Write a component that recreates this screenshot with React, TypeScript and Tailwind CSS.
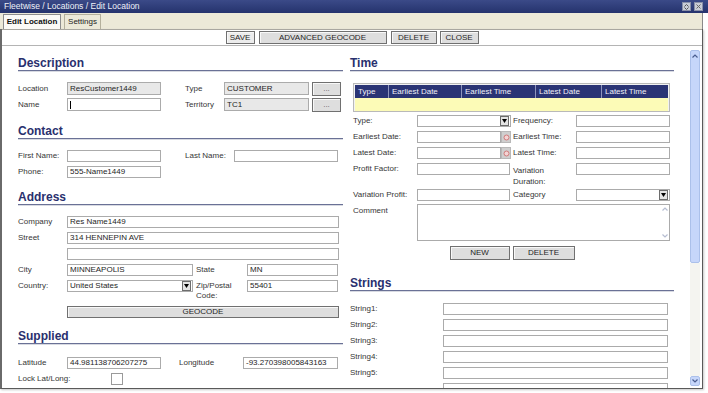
import React from "react";

type FP = { w: string; v?: string; ro?: boolean; h?: string; caret?: boolean; cls?: string };

function Field({ w, v, ro, h, caret, cls = "" }: FP) {
  return (
    <div
      className={`${w} ${h ?? "h-[12px]"} shrink-0 border border-[#ababab] ${
        ro ? "bg-[#e8e8e8]" : "bg-white"
      } flex items-center pl-[2px] text-[8px] text-[#1e1e1e] leading-none overflow-hidden whitespace-nowrap ${cls}`}
    >
      {caret && <span className="w-px h-[8px] bg-black" />}
      {v}
    </div>
  );
}

function Lbl({ w, children, cls = "" }: { w: string; children?: React.ReactNode; cls?: string }) {
  return <div className={`${w} shrink-0 text-[8px] text-[#363636] leading-[10px] ${cls}`}>{children}</div>;
}

function Btn({ w, h, children, cls = "" }: { w: string; h?: string; children?: React.ReactNode; cls?: string }) {
  return (
    <div
      className={`${w} ${h ?? "h-[13px]"} shrink-0 flex items-center justify-center border border-[#707070] bg-[#dedede] shadow-[inset_1px_1px_0_#f8f8f8] text-[8px] text-[#1e1e1e] leading-none ${cls}`}
    >
      {children}
    </div>
  );
}

function Arrow() {
  return (
    <div className="w-[9px] h-[10px] shrink-0 border border-[#6d6d6d] bg-[#e4e4e4] flex items-center justify-center">
      <svg width="5" height="4" viewBox="0 0 5 4">
        <path d="M0 0 L5 0 L2.5 4 Z" fill="#000" />
      </svg>
    </div>
  );
}

function Select({ w, v }: { w: string; v?: string }) {
  return (
    <div
      className={`${w} h-[12px] shrink-0 border border-[#ababab] bg-white flex items-center justify-between pl-[2px] pr-px text-[8px] text-[#1e1e1e] leading-none`}
    >
      <span>{v}</span>
      <Arrow />
    </div>
  );
}

function DateField() {
  return (
    <div className="flex shrink-0 h-[12px]">
      <Field w="w-[84px]" />
      <div className="w-[10px] h-[12px] bg-[#cfcfcf] border border-[#b8b8b8] flex items-center justify-center">
        <svg width="7" height="7" viewBox="0 0 7 7">
          <circle cx="3.5" cy="3.5" r="2.5" fill="#f4d4d4" stroke="#d07a7a" strokeWidth="1" />
        </svg>
      </div>
    </div>
  );
}

function Heading({ children }: { children: React.ReactNode }) {
  return (
    <div className="w-full">
      <div className="h-[14px] text-[12px] font-bold text-[#29306e] leading-[14px]">{children}</div>
      <div className="h-px bg-[#6a7196]" />
      <div className="h-px bg-[#d8dae2]" />
    </div>
  );
}

function Chev({ up }: { up?: boolean }) {
  return (
    <svg width="6" height="4" viewBox="0 0 6 4">
      <path d={up ? "M0.5 3.5 L3 1 L5.5 3.5" : "M0.5 0.5 L3 3 L5.5 0.5"} fill="none" stroke="#4a5d8f" strokeWidth="1.2" />
    </svg>
  );
}

export default function App() {
  return (
    <div className="w-[708px] h-[393px] bg-white relative overflow-hidden font-['Liberation_Sans',Arial,sans-serif]">
      {/* title bar */}
      <div className="h-[13px] bg-gradient-to-b from-[#3b4a88] to-[#25336d] flex items-center justify-between pl-[4px] pr-[5px]">
        <span className="text-[8.5px] text-[#eef0f8] leading-none">Fleetwise / Locations / Edit Location</span>
        <div className="flex gap-[3px]">
          <div className="w-[9px] h-[9px] bg-[#c9ccd6] border border-[#8a90a8] flex items-center justify-center">
            <svg width="5" height="6" viewBox="0 0 5 6">
              <path d="M0.5 2.5 L2.5 0.5 L4.5 2.5 M0.5 3.5 L2.5 5.5 L4.5 3.5" fill="none" stroke="#555" strokeWidth="1" />
            </svg>
          </div>
          <div className="w-[9px] h-[9px] bg-[#c9ccd6] border border-[#8a90a8] flex items-center justify-center">
            <svg width="5" height="5" viewBox="0 0 5 5">
              <path d="M0.5 0.5 L4.5 4.5 M4.5 0.5 L0.5 4.5" stroke="#666" strokeWidth="1" />
            </svg>
          </div>
        </div>
      </div>

      {/* tab bar */}
      <div className="h-[16px] w-[703px] bg-[#ece9d8] border-r border-[#8a8a8a] flex items-end pl-[3px] gap-[3px]">
        <div className="h-[15px] w-[58px] bg-[#fbfaf6] border border-b-0 border-[#8d8d8d] flex items-center justify-center text-[8px] font-bold text-[#111] leading-none">
          Edit Location
        </div>
        <div className="h-[15px] w-[37px] bg-[#ece9d8] border border-b-0 border-[#b4b09c] flex items-center justify-center text-[8px] text-[#222] leading-none">
          Settings
        </div>
      </div>

      {/* frame */}
      <div className="w-[703px] h-[360px] flex flex-col border-l-2 border-l-[#6a6a6a] border-r border-r-[#5a5a5a] border-b border-b-[#5a5a5a] shadow-[1px_1px_2px_#c8c8c8]">
        {/* toolbar */}
        <div className="h-[17px] shrink-0 border-t border-t-[#a9a7a0] border-b border-b-[#b4b4b4] bg-white flex items-center justify-center gap-[4px]">
          <Btn w="w-[29px]" cls="bg-[#ececec]">SAVE</Btn>
          <Btn w="w-[128px]">ADVANCED GEOCODE</Btn>
          <Btn w="w-[46px]">DELETE</Btn>
          <Btn w="w-[39px]" cls="-ml-px">CLOSE</Btn>
        </div>

        {/* content */}
        <div className="flex-1 flex overflow-hidden pl-[16px]">
          {/* left column */}
          <div className="w-[325px] shrink-0 flex flex-col pt-[10px]">
            <Heading>Description</Heading>
            <div className="mt-[10px] flex flex-col gap-[3px]">
              <div className="flex items-center h-[13px]">
                <Lbl w="w-[49px]">Location</Lbl>
                <Field w="w-[94px]" h="h-[13px]" ro v="ResCustomer1449" />
                <Lbl w="w-[39px]" cls="ml-[24px]">Type</Lbl>
                <Field w="w-[85px]" h="h-[13px]" ro v="CUSTOMER" />
                <Btn w="w-[29px]" h="h-[14px]" cls="ml-[3px] bg-[#d4d4d4] text-[#666] border-[#555]">...</Btn>
              </div>
              <div className="flex items-center h-[13px]">
                <Lbl w="w-[49px]">Name</Lbl>
                <Field w="w-[94px]" h="h-[13px]" caret />
                <Lbl w="w-[39px]" cls="ml-[24px]">Territory</Lbl>
                <Field w="w-[85px]" h="h-[13px]" ro v="TC1" />
                <Btn w="w-[29px]" h="h-[14px]" cls="ml-[3px] bg-[#d4d4d4] text-[#666] border-[#555]">...</Btn>
              </div>
            </div>

            <div className="mt-[13px]">
              <Heading>Contact</Heading>
            </div>
            <div className="mt-[10px] flex flex-col gap-[4px]">
              <div className="flex items-center h-[12px]">
                <Lbl w="w-[49px]">First Name:</Lbl>
                <Field w="w-[94px]" />
                <Lbl w="w-[49px]" cls="ml-[24px]">Last Name:</Lbl>
                <Field w="w-[104px]" />
              </div>
              <div className="flex items-center h-[12px]">
                <Lbl w="w-[49px]">Phone:</Lbl>
                <Field w="w-[94px]" v="555-Name1449" />
              </div>
            </div>

            <div className="mt-[12px]">
              <Heading>Address</Heading>
            </div>
            <div className="mt-[10px] flex flex-col gap-[4px]">
              <div className="flex items-center h-[12px]">
                <Lbl w="w-[49px]">Company</Lbl>
                <Field w="w-[272px]" v="Res Name1449" />
              </div>
              <div className="flex items-center h-[12px]">
                <Lbl w="w-[49px]">Street</Lbl>
                <Field w="w-[272px]" v="314 HENNEPIN AVE" />
              </div>
              <div className="flex items-center h-[12px]">
                <Lbl w="w-[49px]"></Lbl>
                <Field w="w-[272px]" />
              </div>
              <div className="flex items-center h-[12px]">
                <Lbl w="w-[49px]">City</Lbl>
                <Field w="w-[126px]" v="MINNEAPOLIS" />
                <Lbl w="w-[51px]" cls="ml-[3px]">State</Lbl>
                <Field w="w-[91px]" v="MN" />
              </div>
              <div className="flex items-start h-[22px]">
                <Lbl w="w-[49px]" cls="leading-[12px]">Country:</Lbl>
                <Select w="w-[126px]" v="United States" />
                <Lbl w="w-[51px]" cls="ml-[3px] pt-px">
                  Zip/Postal
                  <br />
                  Code:
                </Lbl>
                <Field w="w-[91px]" v="55401" />
              </div>
            </div>
            <div className="mt-[4px] flex">
              <div className="w-[49px] shrink-0" />
              <Btn w="w-[272px]" h="h-[12px]" cls="bg-[#d9d9d9]">GEOCODE</Btn>
            </div>

            <div className="mt-[11px]">
              <Heading>Supplied</Heading>
            </div>
            <div className="mt-[12px] flex flex-col gap-[4px]">
              <div className="flex items-center h-[12px]">
                <Lbl w="w-[49px]">Latitude</Lbl>
                <Field w="w-[94px]" v="44.981138706207275" />
                <Lbl w="w-[64px]" cls="ml-[18px]">Longitude</Lbl>
                <Field w="w-[95px]" v="-93.270398005843163" />
              </div>
              <div className="flex items-center h-[12px]">
                <Lbl w="w-[93px]">Lock Lat/Long:</Lbl>
                <div className="w-[12px] h-[12px] border border-[#9a9a9a] bg-white" />
              </div>
            </div>
          </div>

          {/* right column */}
          <div className="w-[324px] shrink-0 ml-[7px] flex flex-col pt-[10px]">
            <Heading>Time</Heading>
            <div className="mt-[11px] ml-[3px] w-[317px] h-[29px] border border-[#b9b9b9] bg-[#f2f2f2] p-px">
              <div className="flex h-[13px] bg-[#2a3475] text-[8px] text-[#f0f0f8] leading-none">
                <div className="w-[34px] flex items-center pl-[3px] border-r border-[#8e95bd]">Type</div>
                <div className="w-[73px] flex items-center pl-[3px] border-r border-[#8e95bd]">Earliest Date</div>
                <div className="w-[74px] flex items-center pl-[3px] border-r border-[#8e95bd]">Earliest Time</div>
                <div className="w-[66px] flex items-center pl-[3px] border-r border-[#8e95bd]">Latest Date</div>
                <div className="flex-1 flex items-center pl-[3px]">Latest Time</div>
              </div>
              <div className="h-[13px] bg-[#fcfbb7]" />
            </div>

            <div className="mt-[3px] ml-[3px] flex flex-col gap-[4px]">
              <div className="flex items-center h-[12px]">
                <Lbl w="w-[64px]">Type:</Lbl>
                <Select w="w-[94px]" />
                <Lbl w="w-[63px]" cls="ml-[2px]">Frequency:</Lbl>
                <Field w="w-[94px]" />
              </div>
              <div className="flex items-center h-[12px]">
                <Lbl w="w-[64px]">Earliest Date:</Lbl>
                <DateField />
                <Lbl w="w-[63px]" cls="ml-[2px]">Earliest Time:</Lbl>
                <Field w="w-[94px]" />
              </div>
              <div className="flex items-center h-[12px]">
                <Lbl w="w-[64px]">Latest Date:</Lbl>
                <DateField />
                <Lbl w="w-[63px]" cls="ml-[2px]">Latest Time:</Lbl>
                <Field w="w-[94px]" />
              </div>
              <div className="flex items-start h-[22px]">
                <Lbl w="w-[64px]" cls="leading-[12px]">Profit Factor:</Lbl>
                <Field w="w-[93px]" />
                <Lbl w="w-[63px]" cls="ml-[3px] pt-[2px] leading-[11px]">
                  Variation
                  <br />
                  Duration:
                </Lbl>
                <Field w="w-[94px]" />
              </div>
              <div className="flex items-center h-[12px]">
                <Lbl w="w-[64px]">Variation Profit:</Lbl>
                <Field w="w-[93px]" />
                <Lbl w="w-[63px]" cls="ml-[3px]">Category</Lbl>
                <Select w="w-[94px]" />
              </div>
            </div>
            <div className="mt-[3px] ml-[3px] flex items-start">
              <Lbl w="w-[64px]" cls="pt-[2px]">Comment</Lbl>
              <div className="w-[253px] h-[37px] border border-[#ababab] bg-white flex justify-end">
                <div className="w-[9px] h-full flex flex-col justify-between items-center py-[2px] opacity-40">
                  <Chev up />
                  <Chev />
                </div>
              </div>
            </div>
            <div className="mt-[4px] h-px bg-[#a8a8a8]" />
            <div className="h-px bg-[#e4e4e4]" />
            <div className="mt-px flex justify-center gap-[3px]">
              <Btn w="w-[60px]" h="h-[14px]">NEW</Btn>
              <Btn w="w-[62px]" h="h-[14px]">DELETE</Btn>
            </div>

            <div className="mt-[16px]">
              <Heading>Strings</Heading>
            </div>
            <div className="mt-[11px] flex flex-col gap-[4px]">
              {["String1:", "String2:", "String3:", "String4:", "String5:", ""].map((s, i) => (
                <div key={i} className="flex items-center h-[12px]">
                  <Lbl w="w-[93px]">{s}</Lbl>
                  <Field w="w-[225px]" />
                </div>
              ))}
            </div>
          </div>

          {/* scrollbar */}
          <div className="w-[10px] shrink-0 ml-[16px] flex flex-col pt-[4px] pb-[2px]">
            <div className="h-[213px] bg-[#c6d6fa] border border-[#abc0ea] rounded-[2px] flex justify-center pt-[3px]">
              <Chev up />
            </div>
            <div className="flex-1 bg-[#f4f4f0]" />
            <div className="h-[10px] bg-[#c6d6fa] border border-[#abc0ea] rounded-[2px] flex items-center justify-center">
              <Chev />
            </div>
          </div>
        </div>
      </div>
    </div>
  );
}
